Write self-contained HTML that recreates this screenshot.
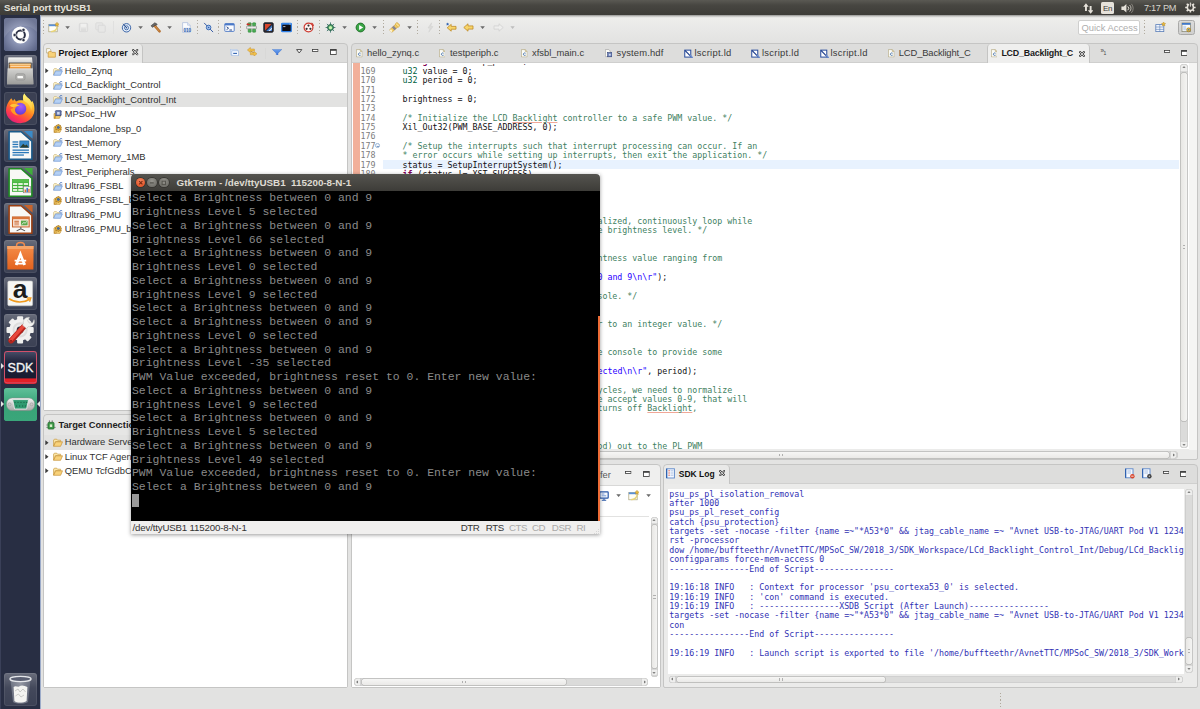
<!DOCTYPE html>
<html lang="en">
<head>
<meta charset="utf-8">
<title>Serial port ttyUSB1</title>
<style>
*{box-sizing:border-box;margin:0;padding:0}
html,body{width:1200px;height:709px;overflow:hidden;background:#e3e3e2}
body{position:relative;font-family:"Liberation Sans","DejaVu Sans",sans-serif;font-size:9.4px;color:#2e2e2e}
.abs{position:absolute}
/* ---------- top panel ---------- */
#panel{position:absolute;left:0;top:0;width:1200px;height:15px;box-shadow:0 .5px 2px rgba(0,0,0,.45);background:linear-gradient(#5a5953,#474641 35%,#3d3c38);color:#e6e2da;}
#panel .title{position:absolute;left:4px;top:1.3px;font-weight:bold;font-size:9.6px;line-height:13px;white-space:nowrap}
#panel .clock{position:absolute;left:1144px;top:1.6px;letter-spacing:-.3px;font-size:9.2px;line-height:13px;white-space:nowrap;color:#d8d4cc}
/* ---------- launcher ---------- */
#launcher{position:absolute;left:0;top:15px;width:41px;height:694px;background:#282e43;border-right:1.2px solid #9cabc9;border-left:1px solid #3a4058}
.tile{position:absolute;left:3px;width:33px;height:33px;border-radius:3px;background:linear-gradient(rgba(255,255,255,.30),rgba(255,255,255,.13) 45%,rgba(255,255,255,.09));box-shadow:inset 0 0 0 1px rgba(255,255,255,.08);overflow:hidden}
/* ---------- eclipse ---------- */
#toolbar{position:absolute;left:41px;top:15px;width:1159px;height:26px;background:linear-gradient(#efefed,#e3e3e2)}
.view{position:absolute;background:linear-gradient(#dddddc 0 18.4px,#cfcfce 18.4px 19.2px,#ebebea 19.2px);border:1px solid #c5c5c4;border-radius:4px 4px 2px 2px}
.view .content{position:absolute;left:0;right:0;bottom:0;background:#fff}
.tab{position:absolute;top:0;height:19px;line-height:19px;white-space:nowrap;font-size:9.4px;color:#333}
.tab.active{font-weight:bold;font-size:8.95px;background:#e9e9e8;border-right:1px solid #c4c4c3;border-radius:4px 4px 0 0;color:#111}
.mono{font-family:"DejaVu Sans Mono","Liberation Mono",monospace;font-size:8.3px;line-height:9.375px;white-space:pre}
#code .c{color:#3f7f5f}#code .k{color:#7f0055;font-weight:bold}#code .t{color:#006141}#code .s{color:#2a00ff}#code .u{text-decoration:underline;text-decoration-color:#f0a898;text-decoration-thickness:.7px;text-underline-offset:1px}
.tree .row{position:absolute;left:0;right:0;height:14.375px;line-height:14.375px;white-space:nowrap;color:#303030}
.tree .row.sel{background:#e2e2e1}
.tree .row span{position:absolute;left:20.7px;top:0}
.tree .row .ar{position:absolute;left:1.1px;top:4.3px;width:3.9px;height:5.4px}
.tree .row .ic{position:absolute;left:9px;top:2.5px;width:10px;height:9px}
.etab{position:absolute;top:-.6px;line-height:19px;white-space:nowrap;color:#3a3a3a;font-size:9.4px}
.etab.act{font-weight:bold;color:#1c1c1c;font-size:8.9px;letter-spacing:-.2px;top:.3px}
.strk{position:absolute;background:#dbdbda;border-radius:4px;box-shadow:inset 0 0 0 .6px #c6c6c5}
.sth{position:absolute;background:linear-gradient(90deg,#e6e5e2,#f6f6f5);border-radius:4px;box-shadow:inset 0 0 0 .7px #b2b2b1}
.sth.h{background:linear-gradient(#f8f8f7,#e8e7e5)}
.lar{position:absolute;width:0;height:0;border:0 solid transparent}
.sbt{position:absolute;background:#eeeeed;box-shadow:inset 0 0 0 .6px #c4c4c3}
.grip{position:absolute}
.sar{position:absolute;width:0;height:0;border:2.2px solid transparent;transform:scale(.8)}
#statusbar{position:absolute;left:41px;top:689px;width:1159px;height:20px;background:#e2e2e1}
/* ---------- gtkterm ---------- */
#term .wb{position:absolute;top:3.7px;width:9.6px;height:9.6px;border-radius:50%;background:radial-gradient(circle at 50% 35%,#96958f,#72716b 70%);box-shadow:0 0 0 .7px #33322e}
#term .wb svg{position:absolute;left:0;top:0;width:100%;height:100%}
#term .cur{background:#9a9a9a}
#term .sb{position:absolute;right:0;top:125px;width:2.2px;height:205.2px;background:#ee6c36}
#term{position:absolute;left:131px;top:174px;width:469px;height:359.6px;box-shadow:0 1px 4px rgba(0,0,0,.4)}
#term .tbar{position:absolute;left:0;top:0;width:100%;height:17px;background:linear-gradient(#55544f,#3d3c38);border-radius:4px 4px 0 0;color:#dfdbd2;font-weight:bold;font-size:9.84px;line-height:17px}
#term .screen{position:absolute;left:0;top:17px;width:100%;height:330.2px;background:#000;color:#8a8a8a;font-family:"Liberation Mono","DejaVu Sans Mono",monospace;font-size:11.458px;line-height:13.75px;white-space:pre;overflow:hidden}
#term .sbar{position:absolute;left:0;top:347.2px;width:100%;height:12.4px;background:#f0efee;font-size:9.7px;line-height:14.2px;color:#333;letter-spacing:-.4px;white-space:nowrap}
</style>
</head>
<body>
<svg width="0" height="0" style="position:absolute">
<defs>
<symbol id="i-proj" viewBox="0 0 10 9"><path d="M0.6 8 L0.6 2.4 L1.4 1.5 L3.4 1.5 L4.2 2.5 L6.4 2.5 L6.4 3.8 L2.6 3.8Z" fill="#fbf0c4" stroke="#c9b478" stroke-width=".6"/><path d="M0.6 8.3 L2.5 3.9 L9.4 3.9 L7.5 8.3Z" fill="#b4d0f4" stroke="#5f8cd0" stroke-width=".6"/><path d="M9.2 0.9 C8 0.1 6.7 0.7 6.7 1.8 C6.7 2.9 8 3.4 9.2 2.7" fill="none" stroke="#3f6cb8" stroke-width=".9"/></symbol>
<symbol id="i-fold" viewBox="0 0 10 9"><path d="M0.6 8.2 L0.6 2.0 L1.4 1.2 L3.8 1.2 L4.6 2.2 L7.6 2.2 L7.6 3.6 L2.6 3.6 L0.6 8.2Z" fill="#fbe7a8" stroke="#c99a3c" stroke-width=".7"/><path d="M0.7 8.3 L2.6 3.8 L9.5 3.8 L7.6 8.3Z" fill="#f8d27a" stroke="#c7933a" stroke-width=".7"/></symbol>
<symbol id="i-hw" viewBox="0 0 10 10"><path d="M0.6 9.2 L0.6 4.0 L2 4 L2 9.2Z M0.7 9.3 L2.4 5.6 L8.2 5.6 L6.6 9.3Z" fill="#f6cf72" stroke="#c08a2c" stroke-width=".7"/><rect x="2.6" y="0.8" width="5.6" height="5.6" fill="#6b7fb5" stroke="#2f3f78" stroke-width=".7"/><rect x="4" y="2.2" width="2.8" height="2.8" fill="#cfd8f0"/><path d="M8.2 1.6h1.2M8.2 3.2h1.2M8.2 4.8h1.2M1.4 1.6h1.2M1.4 3.2h1.2" stroke="#2f3f78" stroke-width=".6"/></symbol>
<symbol id="i-bsp" viewBox="0 0 10 10"><path d="M0.6 9.2 L0.6 3.4 L1.4 2.6 L3 2.6 L3 9.2Z M0.7 9.3 L2.4 5.4 L9 5.4 L7.2 9.3Z" fill="#f6cf72" stroke="#c08a2c" stroke-width=".7"/><circle cx="5.4" cy="3.8" r="3" fill="#f1c550" stroke="#a8741c" stroke-width=".8"/><circle cx="5.4" cy="3.8" r="1.3" fill="#3a6db6" stroke="#1f3f78" stroke-width=".5"/><path d="M5.4 0.2v1M5.4 6.4v1M1.8 3.8h1M8 3.8h1M2.9 1.3l.7.7M7.2 5.6l.7.7M7.9 1.3l-.7.7M3.6 5.6l-.7.7" stroke="#a8741c" stroke-width=".8"/></symbol>
<symbol id="i-cfile" viewBox="0 0 8 10"><path d="M0.5 0.5 H5.2 L7.5 2.8 V9.5 H0.5Z" fill="#fbfbf6" stroke="#a79a6c" stroke-width=".7"/><path d="M5.2 0.5 V2.8 H7.5" fill="#e6dcb0" stroke="#a79a6c" stroke-width=".6"/><path d="M5.6 4.9 C4.2 4.1 2.9 4.9 2.9 6.1 C2.9 7.4 4.3 8 5.6 7.3" fill="none" stroke="#3465a8" stroke-width="1"/></symbol>
<symbol id="i-hdf" viewBox="0 0 9 10"><path d="M0.5 0.5 H4.4 L6.2 2.3 V9 H0.5Z" fill="#fbfbf6" stroke="#9a9a9a" stroke-width=".7"/><rect x="3.2" y="4.2" width="5" height="5" fill="#6b7fb5" stroke="#2f3f78" stroke-width=".7"/><rect x="4.6" y="5.6" width="2.2" height="2.2" fill="#cfd8f0"/></symbol>
<symbol id="i-ld" viewBox="0 0 10 10"><rect x="0.8" y="1" width="6.4" height="7.4" fill="#fff" stroke="#2b4f9e" stroke-width="1.1"/><path d="M1 1.2 L8.8 9.2" stroke="#1f3f8e" stroke-width="1.3"/><path d="M6.4 6.2 L9.4 9.6" stroke="#6f8fd0" stroke-width="1.6"/></symbol>
<symbol id="i-dd" viewBox="0 0 6 4"><path d="M0.1 0.2 H5.9 L3 3.8Z" fill="#6a6a6a"/></symbol>
<symbol id="i-min" viewBox="0 0 8 4"><rect x="0.6" y="0.6" width="6.8" height="2.4" fill="#fff" stroke="#3a3a3a" stroke-width="1"/></symbol>
<symbol id="i-max" viewBox="0 0 8 7"><rect x="0.6" y="0.8" width="6.8" height="5.6" fill="#fff" stroke="#3a3a3a" stroke-width="1"/><rect x="0.2" y="0.2" width="7.6" height="1.8" fill="#3a3a3a"/></symbol>
<symbol id="i-x" viewBox="0 0 8 8"><path d="M1.3 1.3 L6.7 6.7 M6.7 1.3 L1.3 6.7" stroke="#3c3c3c" stroke-width="2.6" stroke-linecap="square"/><path d="M1.3 1.3 L6.7 6.7 M6.7 1.3 L1.3 6.7" stroke="#f6f6f6" stroke-width="1" stroke-linecap="square"/></symbol>
<symbol id="i-arrow" viewBox="0 0 4 6"><path d="M0.2 0.2 L3.8 3 L0.2 5.8Z" fill="#3c3c3c"/></symbol>
</defs>
</svg>

<!-- ===== Eclipse toolbar ===== -->
<div id="toolbar">
<div class="abs" style="left:1.8px;top:5px;width:1.2px;height:15px;background:repeating-linear-gradient(#b2aca0 0 1.3px,transparent 1.3px 3.2px)"></div>
<svg class="abs" style="left:7.2px;top:7.0px;width:11px;height:11px" viewBox="0 0 11 11"><rect x="0.8" y="2.4" width="8.4" height="7.4" fill="#fffef6" stroke="#aaa27a" stroke-width=".7"/><rect x="0.8" y="2.4" width="8.4" height="1.8" fill="#5a90d8"/><path d="M3 9.6 C6 9.4 8.6 7.6 9.2 5" stroke="#e8d47a" stroke-width="1.4" fill="none"/><path d="M9 0.2 L9.7 1.6 L11 1.9 L10 3 L10.3 4.4 L9 3.7 L7.7 4.4 L8 3 L7 1.9 L8.3 1.6Z" fill="#e6b93c" stroke="#b8861e" stroke-width=".4"/></svg>
<svg class="abs" style="left:24.4px;top:11.2px;width:5.2px;height:3.2px" viewBox="0 0 6 4"><path d="M0.1 0.2 H5.9 L3 3.8Z" fill="#6a6a6a"/></svg>
<svg class="abs" style="left:36.5px;top:7.0px;width:11px;height:11px" viewBox="0 0 11 11"><rect x="1.4" y="1.4" width="8.2" height="8.2" rx=".8" fill="#e7e7e6" stroke="#d6d6d5" stroke-width=".8"/><rect x="3" y="1.8" width="5" height="3" fill="#f0f0ef"/><rect x="3" y="6.4" width="5" height="3" fill="#dddddc"/></svg>
<svg class="abs" style="left:54.2px;top:7.0px;width:11px;height:11px" viewBox="0 0 11 11"><rect x="0.8" y="0.8" width="7" height="7" rx=".8" fill="#e8e8e7" stroke="#d8d8d7" stroke-width=".8"/><rect x="3.2" y="3.2" width="7" height="7" rx=".8" fill="#e7e7e6" stroke="#d6d6d5" stroke-width=".8"/></svg>
<div class="abs" style="left:72.0px;top:6px;width:1px;height:13px;background:#e0e0df"></div>
<svg class="abs" style="left:79.5px;top:7.0px;width:11px;height:11px" viewBox="0 0 11 11"><circle cx="5.5" cy="5.8" r="4.2" fill="#e4edf8" stroke="#3c66a8" stroke-width="1"/><circle cx="5.5" cy="5.8" r="2" fill="none" stroke="#3c66a8" stroke-width=".9"/><circle cx="5.5" cy="5.8" r=".7" fill="#2b4f8c"/><path d="M2.2 1.8 L5.5 5.8" stroke="#2b4f8c" stroke-width="1"/></svg>
<svg class="abs" style="left:96.9px;top:11.2px;width:5.2px;height:3.2px" viewBox="0 0 6 4"><path d="M0.1 0.2 H5.9 L3 3.8Z" fill="#6a6a6a"/></svg>
<svg class="abs" style="left:108.5px;top:6.5px;width:12px;height:12px" viewBox="0 0 12 12"><path d="M4.6 3.6 L9.6 9.4" stroke="#b06a2a" stroke-width="2.4" stroke-linecap="round"/><path d="M4.9 3.9 L9.3 9.1" stroke="#d99a52" stroke-width=".9" stroke-linecap="round"/><path d="M1 3.8 L4.8 0.8 L7.2 2.2 L6.2 3.4 L5 3 L2.6 5.4Z" fill="#6a6a6a" stroke="#3c3c3c" stroke-width=".6"/></svg>
<svg class="abs" style="left:126.4px;top:11.2px;width:5.2px;height:3.2px" viewBox="0 0 6 4"><path d="M0.1 0.2 H5.9 L3 3.8Z" fill="#6a6a6a"/></svg>
<svg class="abs" style="left:139.5px;top:7.0px;width:11px;height:11px" viewBox="0 0 11 11"><path d="M1.6 0.6 H6.6 L9.2 3.2 V10.4 H1.6Z" fill="#fbfcfe" stroke="#a9badb" stroke-width=".7"/><path d="M6.6 0.6 V3.2 H9.2" fill="#e6ecf6" stroke="#a9badb" stroke-width=".6"/><rect x="2.6" y="5.6" width="6.4" height="4.4" fill="#dfe8f6"/><text x="2.4" y="9.6" font-family="Liberation Sans, sans-serif" font-size="4.6" font-weight="bold" fill="#2f5fa8">010</text></svg>
<div class="abs" style="left:155.5px;top:5px;width:1.2px;height:15px;background:repeating-linear-gradient(#b2aca0 0 1.3px,transparent 1.3px 3.2px)"></div>
<svg class="abs" style="left:161.5px;top:7.0px;width:11px;height:11px" viewBox="0 0 11 11"><path d="M1.4 1.2 L9.8 9.8" stroke="#3a5fa8" stroke-width="1" stroke-linecap="round"/><circle cx="5.6" cy="5.5" r="2.3" fill="#a9c4ea" stroke="#2f62b0" stroke-width=".9"/><circle cx="5.6" cy="5.5" r=".8" fill="#2f62b0"/></svg>
<div class="abs" style="left:176.5px;top:5px;width:1.2px;height:15px;background:repeating-linear-gradient(#b2aca0 0 1.3px,transparent 1.3px 3.2px)"></div>
<svg class="abs" style="left:182.5px;top:7.0px;width:11px;height:11px" viewBox="0 0 11 11"><rect x="0.8" y="1.6" width="9.4" height="7.8" rx=".6" fill="#fbfcff" stroke="#5a82c8" stroke-width="1"/><rect x="0.8" y="1.6" width="9.4" height="1.8" fill="#4a78c8"/><path d="M2.6 4.8 L4.6 6.2 L2.6 7.6" stroke="#1f3f80" stroke-width=".9" fill="none"/><path d="M5.4 8 H8" stroke="#1f3f80" stroke-width=".9"/></svg>
<div class="abs" style="left:198.5px;top:5px;width:1.2px;height:15px;background:repeating-linear-gradient(#b2aca0 0 1.3px,transparent 1.3px 3.2px)"></div>
<svg class="abs" style="left:204.5px;top:7.0px;width:11px;height:11px" viewBox="0 0 11 11"><rect x="0.6" y="4.1" width="9.8" height="2.8" rx=".6" fill="#ececec" stroke="#7a7a7a" stroke-width=".6"/><rect x="2.2" y="0.8" width="3" height="3" rx=".5" fill="#4aae54" stroke="#1f7a2a" stroke-width=".5"/><rect x="6.6" y="0.8" width="3" height="3" rx=".5" fill="#4aae54" stroke="#1f7a2a" stroke-width=".5"/><rect x="2.2" y="7.2" width="3" height="3" rx=".5" fill="#4aae54" stroke="#1f7a2a" stroke-width=".5"/><rect x="6.6" y="7.2" width="3" height="3" rx=".5" fill="#4aae54" stroke="#1f7a2a" stroke-width=".5"/><path d="M0.2 2.3 L2.2 0.7 V1.7 H4.4 V2.9 H2.2 V3.9Z" fill="#c8342c"/></svg>
<svg class="abs" style="left:222.2px;top:7.0px;width:11px;height:11px" viewBox="0 0 11 11"><rect x="0.8" y="0.8" width="9.4" height="9.4" rx="1" fill="#2c2c34" stroke="#1a1a22" stroke-width=".9"/><path d="M2 2 H8.4 L2 8.4Z" fill="#d8452c"/><path d="M9 3.2 V9 H3.2Z" fill="#3f78c8"/><path d="M9 5.4 L5.4 9 H7 L9 7Z" fill="#e8eef8"/></svg>
<svg class="abs" style="left:239.7px;top:7.0px;width:11px;height:11px" viewBox="0 0 11 11"><rect x="0.7" y="1.3" width="9.6" height="8.4" rx=".8" fill="#0c0c14" stroke="#2f80e8" stroke-width="1.2"/><rect x="0.7" y="1.3" width="9.6" height="1.4" fill="#3a8af0"/><path d="M2.2 4.6 H4.4" stroke="#e8eeff" stroke-width=".8"/><circle cx="9" cy="2" r=".5" fill="#fff"/></svg>
<div class="abs" style="left:256.0px;top:5px;width:1.2px;height:15px;background:repeating-linear-gradient(#b2aca0 0 1.3px,transparent 1.3px 3.2px)"></div>
<svg class="abs" style="left:261.5px;top:7.0px;width:11px;height:11px" viewBox="0 0 11 11"><circle cx="5.5" cy="5.5" r="4.4" fill="#fff4f2" stroke="#cc3a30" stroke-width="1.2"/><circle cx="5.5" cy="3.6" r="1.1" fill="#333"/><circle cx="3.6" cy="6.8" r="1.1" fill="#333"/><circle cx="7.4" cy="6.8" r="1.1" fill="#333"/><path d="M8.4 1 A5 5 0 0 1 10.4 4" stroke="#cc3a30" stroke-width="1.4" fill="none"/></svg>
<div class="abs" style="left:278.0px;top:5px;width:1.2px;height:15px;background:repeating-linear-gradient(#b2aca0 0 1.3px,transparent 1.3px 3.2px)"></div>
<svg class="abs" style="left:283.5px;top:7.0px;width:11px;height:11px" viewBox="0 0 11 11"><path d="M5.5 0.4v10.2M0.6 5.5h9.8M1.9 1.9l7.2 7.2M9.1 1.9l-7.2 7.2" stroke="#2f6a5e" stroke-width=".8"/><circle cx="5.5" cy="5.5" r="3" fill="#4a9a62" stroke="#245a4e" stroke-width=".8"/><circle cx="5.5" cy="5.7" r="1.6" fill="#c8f4b0"/></svg>
<svg class="abs" style="left:301.4px;top:11.2px;width:5.2px;height:3.2px" viewBox="0 0 6 4"><path d="M0.1 0.2 H5.9 L3 3.8Z" fill="#6a6a6a"/></svg>
<svg class="abs" style="left:313.5px;top:7.0px;width:11px;height:11px" viewBox="0 0 11 11"><circle cx="5.5" cy="5.5" r="4.4" fill="#3aa646" stroke="#1a6a22" stroke-width=".9"/><path d="M4.1 3 L8.2 5.5 L4.1 8Z" fill="#fff"/></svg>
<svg class="abs" style="left:331.4px;top:11.2px;width:5.2px;height:3.2px" viewBox="0 0 6 4"><path d="M0.1 0.2 H5.9 L3 3.8Z" fill="#6a6a6a"/></svg>
<div class="abs" style="left:341.5px;top:5px;width:1.2px;height:15px;background:repeating-linear-gradient(#b2aca0 0 1.3px,transparent 1.3px 3.2px)"></div>
<svg class="abs" style="left:348.0px;top:7.0px;width:11px;height:11px" viewBox="0 0 11 11"><g transform="rotate(-42 5.5 5.5)"><rect x="0.2" y="3.9" width="10.6" height="3.4" rx="1" fill="#f4cf62" stroke="#c8962c" stroke-width=".6"/><rect x="3.6" y="3.7" width="2.6" height="3.8" fill="#8a8690"/><rect x="8.2" y="3.3" width="2.6" height="4.6" rx=".8" fill="#f8dc86" stroke="#c8962c" stroke-width=".5"/><rect x="0" y="4.4" width="1.6" height="2.4" fill="#fff6d8"/></g></svg>
<svg class="abs" style="left:365.9px;top:11.2px;width:5.2px;height:3.2px" viewBox="0 0 6 4"><path d="M0.1 0.2 H5.9 L3 3.8Z" fill="#6a6a6a"/></svg>
<div class="abs" style="left:376.0px;top:5px;width:1.2px;height:15px;background:repeating-linear-gradient(#b2aca0 0 1.3px,transparent 1.3px 3.2px)"></div>
<svg class="abs" style="left:383.5px;top:7.0px;width:11px;height:11px" viewBox="0 0 11 11"><path d="M6.6 0.8 L3 6 H5.2 L3.8 10.2 L8 4.6 H5.8Z" fill="#dcdcdb" stroke="#d0d0cf" stroke-width=".5"/></svg>
<div class="abs" style="left:398.0px;top:5px;width:1.2px;height:15px;background:repeating-linear-gradient(#b2aca0 0 1.3px,transparent 1.3px 3.2px)"></div>
<svg class="abs" style="left:405.0px;top:7.0px;width:11px;height:11px" viewBox="0 0 11 11"><path d="M1.2 5.8 L5.2 2.4 V4.4 H10 V7.2 H5.2 V9.2Z" fill="#f7d56a" stroke="#c08a24" stroke-width=".8"/><path d="M1.6 0.4 L2.1 1.5 L3.2 1.7 L2.4 2.5 L2.6 3.6 L1.6 3.1 L0.6 3.6 L0.8 2.5 L0 1.7 L1.1 1.5Z" fill="#2f62b0"/></svg>
<svg class="abs" style="left:421.5px;top:7.0px;width:11px;height:11px" viewBox="0 0 11 11"><path d="M0.8 5.5 L5 1.8 V3.9 H10 V7.1 H5 V9.2Z" fill="#f7d56a" stroke="#c08a24" stroke-width=".8"/></svg>
<svg class="abs" style="left:439.4px;top:11.2px;width:5.2px;height:3.2px" viewBox="0 0 6 4"><path d="M0.1 0.2 H5.9 L3 3.8Z" fill="#6a6a6a"/></svg>
<svg class="abs" style="left:451.5px;top:7.0px;width:11px;height:11px" viewBox="0 0 11 11"><path d="M10.2 5.5 L6 1.8 V3.9 H1 V7.1 H6 V9.2Z" fill="#eeeeed" stroke="#d2d2d1" stroke-width=".8"/></svg>
<svg class="abs" style="left:469.4px;top:11.2px;width:5.2px;height:3.2px" viewBox="0 0 6 4"><path d="M0.3 0.4 H5.7 L3 3.7Z" fill="#bdbdbd"/></svg>
<div class="abs" style="left:1037px;top:4.6px;width:61.5px;height:15.4px;background:#fff;border:1px solid #cfcfce;border-radius:2px;color:#aeaeae;font-size:9.4px;line-height:13.4px;padding-left:2.4px;white-space:nowrap">Quick Access</div>
<div class="abs" style="left:1103.0px;top:5px;width:1.2px;height:15px;background:repeating-linear-gradient(#b2aca0 0 1.3px,transparent 1.3px 3.2px)"></div>
<svg class="abs" style="left:1113.5px;top:7.0px;width:11px;height:11px" viewBox="0 0 11 11"><rect x="0.8" y="2.6" width="8" height="7" fill="#f2f6fc" stroke="#5a7fb8" stroke-width=".8"/><path d="M0.8 5 H8.8 M0.8 7.4 H8.8 M4.8 2.6 V9.6" stroke="#5a7fb8" stroke-width=".6"/><path d="M8.6 0 L9.3 1.3 L10.7 1.5 L9.7 2.5 L9.9 3.9 L8.6 3.3 L7.3 3.9 L7.5 2.5 L6.5 1.5 L7.9 1.3Z" fill="#e6b93c" stroke="#b8861e" stroke-width=".4"/></svg>
<div class="abs" style="left:1137px;top:5.4px;width:16.6px;height:14.4px;border:1px solid #a9a9a8;border-radius:2.5px;background:linear-gradient(#dcdcdb,#cfcfce)"></div>
<svg class="abs" style="left:1139.9px;top:7.0px;width:11px;height:11px" viewBox="0 0 11 11"><rect x="1" y="1" width="8.4" height="8.6" fill="#fdfdf8" stroke="#8b8b78" stroke-width=".8"/><rect x="1" y="1" width="8.4" height="1.8" fill="#3f78c8"/><rect x="2.2" y="3.8" width="3" height="4.6" fill="#c9d8ee"/><circle cx="7.6" cy="7.8" r="2" fill="#e6b93c" stroke="#8a6a1c" stroke-width=".5"/><circle cx="7.6" cy="7.8" r=".8" fill="#3f78c8"/></svg>
</div>

<!-- ===== Project Explorer ===== -->
<div class="view" id="pe" style="left:43px;top:43px;width:305px;height:368px">
  <div class="tab active" style="left:0;width:99px;padding-left:14.6px">Project Explorer</div>
  <svg class="abs" style="left:2.2px;top:3.5px;width:10px;height:10px" viewBox="0 0 10 10"><path d="M0.6 0.6 H3.6 L4.8 1.8 V5 H0.6Z" fill="#fbfbf6" stroke="#a79a6c" stroke-width=".6"/><path d="M2.2 9.2 V4.2 L3 3.4 H5.2 L6 4.4 H9.4 V9.2Z" fill="#f8d27a" stroke="#c7933a" stroke-width=".7"/></svg>
  <svg class="abs" style="left:88.2px;top:5.2px;width:6.4px;height:6.4px"><use href="#i-x"/></svg>
  <svg class="abs" style="left:186.4px;top:4.6px;width:9px;height:7.4px" viewBox="0 0 9 7.4"><rect x="0.5" y="0.5" width="6.6" height="5" fill="#e8f0fb" stroke="#b4c8e6" stroke-width=".6"/><rect x="1.8" y="1.8" width="6.6" height="5" fill="#f6f9fe" stroke="#9ab6e0" stroke-width=".7"/><path d="M3.2 4.4 H7" stroke="#2f62b0" stroke-width="1.1"/></svg>
  <svg class="abs" style="left:202.8px;top:2.6px;width:10.4px;height:9.6px" viewBox="0 0 10.4 9.6"><path d="M0.4 3 L3.4 0.4 V2 H7.4 V4 H3.4 V5.6Z" fill="#f2c24a" stroke="#c8922c" stroke-width=".5"/><path d="M10 6.8 L7 4.4 V5.8 H3.4 V7.8 H7 V9.2Z" fill="#f2c24a" stroke="#c8922c" stroke-width=".5"/><path d="M3.6 4 L6.8 5.8" stroke="#c8922c" stroke-width=".9"/></svg>
  <svg class="abs" style="left:227.6px;top:4.8px;width:10.2px;height:6.6px" viewBox="0 0 10.2 6.6"><defs><linearGradient id="gfun" x1="0" y1="0" x2="0" y2="1"><stop offset="0" stop-color="#6aa0ee"/><stop offset="1" stop-color="#3a72d8"/></linearGradient></defs><path d="M0.3 0.4 H9.9 L6 4.2 V6.4 L4.2 5.6 V4.2Z" fill="url(#gfun)" stroke="#3a6cc8" stroke-width=".4"/></svg>
  <div class="abs" style="left:220.5px;top:4px;width:1px;height:11px;background:#d8d8d7"></div>
  <svg class="abs" style="left:252.4px;top:5.0px;width:6.4px;height:4.6px" viewBox="0 0 6.4 4.6"><path d="M0.6 0.6 H5.8 L3.2 4Z" fill="#fff" stroke="#3a3a3a" stroke-width=".9"/></svg>
  <svg class="abs" style="left:268.4px;top:5.4px;width:6.6px;height:3.2px"><use href="#i-min"/></svg>
  <svg class="abs" style="left:286.4px;top:5.4px;width:6.8px;height:6px"><use href="#i-max"/></svg>
  <div class="content tree" style="top:19px">
<div class="row" style="top:1.10px"><svg class="ar"><use href="#i-arrow"/></svg><svg class="ic"><use href="#i-proj"/></svg><span>Hello_Zynq</span></div>
<div class="row" style="top:15.48px"><svg class="ar"><use href="#i-arrow"/></svg><svg class="ic"><use href="#i-proj"/></svg><span>LCd_Backlight_Control</span></div>
<div class="row sel" style="top:29.85px"><svg class="ar"><use href="#i-arrow"/></svg><svg class="ic"><use href="#i-proj"/></svg><span>LCd_Backlight_Control_Int</span></div>
<div class="row" style="top:44.23px"><svg class="ar"><use href="#i-arrow"/></svg><svg class="ic"><use href="#i-hw"/></svg><span>MPSoc_HW</span></div>
<div class="row" style="top:58.60px"><svg class="ar"><use href="#i-arrow"/></svg><svg class="ic"><use href="#i-bsp"/></svg><span>standalone_bsp_0</span></div>
<div class="row" style="top:72.97px"><svg class="ar"><use href="#i-arrow"/></svg><svg class="ic"><use href="#i-proj"/></svg><span>Test_Memory</span></div>
<div class="row" style="top:87.35px"><svg class="ar"><use href="#i-arrow"/></svg><svg class="ic"><use href="#i-proj"/></svg><span>Test_Memory_1MB</span></div>
<div class="row" style="top:101.72px"><svg class="ar"><use href="#i-arrow"/></svg><svg class="ic"><use href="#i-proj"/></svg><span>Test_Peripherals</span></div>
<div class="row" style="top:116.10px"><svg class="ar"><use href="#i-arrow"/></svg><svg class="ic"><use href="#i-proj"/></svg><span>Ultra96_FSBL</span></div>
<div class="row" style="top:130.47px"><svg class="ar"><use href="#i-arrow"/></svg><svg class="ic"><use href="#i-bsp"/></svg><span>Ultra96_FSBL_bsp</span></div>
<div class="row" style="top:144.85px"><svg class="ar"><use href="#i-arrow"/></svg><svg class="ic"><use href="#i-proj"/></svg><span>Ultra96_PMU</span></div>
<div class="row" style="top:159.22px"><svg class="ar"><use href="#i-arrow"/></svg><svg class="ic"><use href="#i-bsp"/></svg><span>Ultra96_PMU_bsp</span></div>
  </div>
</div>

<!-- ===== Target Connections ===== -->
<div class="view" id="tc" style="left:43px;top:414px;width:305px;height:274px">
  <div class="tab" style="left:0;width:140px;padding-left:14.4px;font-weight:bold;font-size:9.3px;height:20px;line-height:20.6px;color:#222;background:#e6e6e5;border-radius:4px 0 0 0">Target Connections</div>
  <svg class="abs" style="left:2.0px;top:4.6px;width:10px;height:10px" viewBox="0 0 10 10"><path d="M3.4 0.4 V2.4 M6.2 0.4 V2.4" stroke="#555" stroke-width=".8"/><path d="M0.2 5 H2 M0.2 7.4 H2 M8 7.4 H9.8" stroke="#777" stroke-width=".7"/><rect x="2" y="2.4" width="6" height="6.6" rx=".8" fill="#3f9a4a" stroke="#1f6a2a" stroke-width=".8"/><rect x="3.8" y="4.4" width="2.4" height="2.6" fill="#d8f0c8"/></svg>
  <div class="content tree" style="top:20px">
<div class="row sel" style="top:0.30px"><svg class="ar"><use href="#i-arrow"/></svg><svg class="ic"><use href="#i-fold"/></svg><span>Hardware Server</span></div>
<div class="row" style="top:14.68px"><svg class="ar"><use href="#i-arrow"/></svg><svg class="ic"><use href="#i-fold"/></svg><span>Linux TCF Agent</span></div>
<div class="row" style="top:29.05px"><svg class="ar"><use href="#i-arrow"/></svg><svg class="ic"><use href="#i-fold"/></svg><span>QEMU TcfGdbClient</span></div>
  </div>
</div>

<!-- ===== Editor ===== -->
<div class="view" id="ed" style="left:351px;top:43px;width:847px;height:417px">
  <div class="abs" id="edtabs" style="left:0;top:0;width:843px;height:19px">
    <svg class="abs" style="left:4.0px;top:5.2px;width:6.6px;height:8.6px"><use href="#i-cfile"/></svg><span class="etab" style="left:15.0px">hello_zynq.c</span>
    <svg class="abs" style="left:86.7px;top:5.2px;width:6.6px;height:8.6px"><use href="#i-cfile"/></svg><span class="etab" style="left:98.0px">testperiph.c</span>
    <svg class="abs" style="left:169.0px;top:5.2px;width:6.6px;height:8.6px"><use href="#i-cfile"/></svg><span class="etab" style="left:180.0px">xfsbl_main.c</span>
    <svg class="abs" style="left:252.7px;top:5.2px;width:7.6px;height:8.6px"><use href="#i-hdf"/></svg><span class="etab" style="left:264.6px;letter-spacing:.15px">system.hdf</span>
    <svg class="abs" style="left:331.6px;top:4.6px;width:9.4px;height:9.8px"><use href="#i-ld"/></svg><span class="etab" style="left:342.4px;letter-spacing:.28px">lscript.ld</span>
    <svg class="abs" style="left:399.3px;top:4.6px;width:9.4px;height:9.8px"><use href="#i-ld"/></svg><span class="etab" style="left:410.0px;letter-spacing:.28px">lscript.ld</span>
    <svg class="abs" style="left:467.6px;top:4.6px;width:9.4px;height:9.8px"><use href="#i-ld"/></svg><span class="etab" style="left:478.5px;letter-spacing:.28px">lscript.ld</span>
    <svg class="abs" style="left:536.0px;top:5.2px;width:6.6px;height:8.6px"><use href="#i-cfile"/></svg><span class="etab" style="left:546.8px;letter-spacing:-.14px">LCD_Backlight_C</span>
    <div class="abs" style="left:634.5px;top:0;width:103px;height:19.5px;background:#efefee;border:1px solid #c4c4c3;border-bottom:none;border-top:none;border-radius:4px 4px 0 0"></div><svg class="abs" style="left:638.5px;top:5.2px;width:6.6px;height:8.6px"><use href="#i-cfile"/></svg><span class="etab act" style="left:649.4px">LCD_Backlight_C</span>
    <svg class="abs" style="left:726.5px;top:6.6px;width:6px;height:6px"><use href="#i-x"/></svg>
    <span class="abs" style="left:748.4px;top:3px;font-size:6.4px;color:#444;letter-spacing:-.4px">»<span style="font-size:5px;position:relative;top:1.5px">1</span></span>
    <svg class="abs" style="left:811.5px;top:6.2px;width:6.4px;height:3.2px"><use href="#i-min"/></svg>
    <svg class="abs" style="left:828.5px;top:6.4px;width:6.8px;height:6px"><use href="#i-max"/></svg>
  </div>
  <div class="content" id="edc" style="top:19px;bottom:10px;overflow:hidden">
    <div class="abs" style="left:1px;top:0;width:7px;height:100%;background:#f2b09a"></div>
    <div class="abs" style="left:31px;top:96.8px;width:795.6px;height:9px;background:#e8f2fe"></div>
    <div class="abs" style="left:0;top:1.2px;right:0;bottom:0;overflow:hidden"><div class="abs mono" id="nums" style="left:8.6px;top:-6.8px;color:#7d7d7d">168
169
170
171
172
173
174
175
176
177
178
179
180
181
182
183
184
185
186
187
188
189
190
191
192
193
194
195
196
197
198
199
200
201
202
203
204
205
206
207
208
209
210</div>
    <div class="abs mono" id="code" style="left:30.6px;top:-6.8px;color:#111"><span class="k">    unsigned int</span> temp_period;
<span class="t">    u32</span> value = 0;
<span class="t">    u32</span> period = 0;

    brightness = 0;

<span class="c">    /* Initialize the LCD </span><span class="c u">Backlight</span><span class="c"> controller to a safe PWM value. */</span>
    Xil_Out32(PWM_BASE_ADDRESS, 0);

<span class="c">    /* Setup the interrupts such that interrupt processing can occur. If an</span>
<span class="c">    * error occurs while setting up interrupts, then exit the application. */</span>
    status = SetupInterruptSystem();
<span class="k">    if</span> (status != XST_SUCCESS)
    {
<span class="k">        return</span> XST_FAILURE;
    }

<span class="c">    /* Once the interrupt system gets initialized, continuously loop while</span>
<span class="c">    * waiting on user input that changes the brightness level. */</span>
<span class="k">    while</span> (1)
    {
<span class="c">        /* Ask the user to enter a new brightness value ranging from</span>
<span class="c">        * 0 to 9. */</span>
        print(<span class="s">"Select a Brightness between 0 and 9\n\r"</span>);

<span class="c">        /* Read a character in from the console. */</span>
        value = inbyte();

<span class="c">        /* Convert the ASCII input character to an integer value. */</span>
        period = value - 0x30;

<span class="c">        /* Print the period value out to the console to provide some</span>
<span class="c">        * feedback to the user. */</span>
        xil_printf(<span class="s">"Brightness Level %d selected\n\r"</span>, period);

<span class="c">        /* Since the PWM counts raw clock cycles, we need to normalize</span>
<span class="c">        * the user entry beforehand. Here we accept values 0-9, that will</span>
<span class="c">        * scale the PWM duty cycle where 0 turns off </span><span class="c u">Backlight</span><span class="c">,</span>
<span class="c">        * 9 is full brightness. */</span>
        brightness = period * 110000;

<span class="c">        /* Write the final brightness (period) out to the PL PWM</span>
</div>
</div>
    <div class="abs" style="left:23.4px;top:80.4px;width:4.8px;height:4.8px;border-radius:50%;border:.8px solid #9ab4d4;background:#f2f6fb"><div class="abs" style="left:.8px;top:1.3px;width:1.8px;height:.7px;background:#7a9cc8"></div></div>
  </div>
</div>

<!-- ===== bottom middle view ===== -->
<div class="view" id="bm" style="left:351px;top:463.5px;width:310px;height:224.5px;background:#efefee">
  <span class="abs" style="left:248px;top:0;line-height:19px;color:#5a5a5a">fer</span>
  <svg class="abs" style="left:273.4px;top:6.6px;width:6.6px;height:3.2px"><use href="#i-min"/></svg>
  <svg class="abs" style="left:291.0px;top:6.4px;width:6.8px;height:6px"><use href="#i-max"/></svg>
  <div class="content" style="top:20px;background:#fff;border-top:1px solid #d8d8d7">
    <div class="abs" style="left:0;top:30px;right:11px;height:1px;background:#e2e2e1"></div>
    <svg class="abs" style="left:247.0px;top:5.0px;width:10px;height:10px" viewBox="0 0 10 10"><rect x="0.8" y="0.8" width="8.4" height="6.4" rx=".6" fill="#f2f6fc" stroke="#2a58a8" stroke-width="1.2"/><path d="M2.6 3 H5.4 M2.6 4.8 H7.2" stroke="#5a86d0" stroke-width=".8"/><path d="M2.8 9.3 H7.2 M5 7.4 V9" stroke="#2a58a8" stroke-width="1.1"/></svg>
    <svg class="abs" style="left:264.0px;top:8.6px;width:5.2px;height:3.2px"><use href="#i-dd"/></svg>
    <svg class="abs" style="left:276.4px;top:4.4px;width:11px;height:11px" viewBox="0 0 11 11"><rect x="0.8" y="2.4" width="8.4" height="7.4" fill="#fffef6" stroke="#aaa27a" stroke-width=".7"/><rect x="0.8" y="2.4" width="8.4" height="1.8" fill="#5a90d8"/><path d="M3 9.6 C6 9.4 8.6 7.6 9.2 5" stroke="#e8d47a" stroke-width="1.4" fill="none"/><path d="M9 0.2 L9.7 1.6 L11 1.9 L10 3 L10.3 4.4 L9 3.7 L7.7 4.4 L8 3 L7 1.9 L8.3 1.6Z" fill="#e6b93c" stroke="#b8861e" stroke-width=".4"/></svg>
    <svg class="abs" style="left:294.0px;top:8.6px;width:5.2px;height:3.2px"><use href="#i-dd"/></svg>
  </div>
</div>

<!-- ===== SDK Log ===== -->
<div class="view" id="log" style="left:663px;top:463.5px;width:535px;height:224.5px">
  <div class="tab active" style="left:0;width:66px;padding-left:14.8px;font-size:8.5px">SDK Log</div>
  <svg class="abs" style="left:2.0px;top:3.8px;width:9px;height:10.6px" viewBox="0 0 9 10.6"><rect x="0.6" y="0.8" width="7.8" height="9.2" fill="#f4f8ff" stroke="#5a86c8" stroke-width=".9"/><path d="M0.6 0.8 V10" stroke="#2f62b0" stroke-width="1.4"/><path d="M2.4 2.8h1.4M2.4 5h1.4M2.4 7.2h1.4" stroke="#d8452c" stroke-width=".9"/><path d="M4.6 2.8h2.8M4.6 5h2.8M4.6 7.2h2.8" stroke="#9ab4dc" stroke-width=".8"/></svg>
  <svg class="abs" style="left:54.8px;top:5.6px;width:6.4px;height:6.4px"><use href="#i-x"/></svg>
  <svg class="abs" style="left:461.0px;top:3.4px;width:10px;height:11px" viewBox="0 0 10 11"><rect x="0.6" y="0.8" width="7.4" height="9" fill="#f4f8ff" stroke="#5a86c8" stroke-width=".9"/><path d="M0.6 0.8 V9.8" stroke="#2f62b0" stroke-width="1.3"/><path d="M2.4 3h3.6M2.4 5h3.6" stroke="#9ab4dc" stroke-width=".8"/><circle cx="7.4" cy="8.2" r="2.2" fill="#d8452c"/><path d="M6.2 8.2 H8.6" stroke="#fff" stroke-width=".8"/></svg>
  <svg class="abs" style="left:478.0px;top:3.4px;width:10px;height:11px" viewBox="0 0 10 11"><rect x="0.6" y="0.8" width="7.4" height="9" fill="#f4f8ff" stroke="#5a86c8" stroke-width=".9"/><path d="M0.6 0.8 V9.8" stroke="#2f62b0" stroke-width="1.3"/><path d="M2.4 3h3.6M2.4 5h3.6" stroke="#9ab4dc" stroke-width=".8"/><circle cx="7.4" cy="8.2" r="2.2" fill="#444"/><circle cx="7.4" cy="8.2" r=".8" fill="#bbb"/></svg>
  <svg class="abs" style="left:498.6px;top:6.6px;width:6.6px;height:3.2px"><use href="#i-min"/></svg>
  <svg class="abs" style="left:515.6px;top:6.4px;width:6.8px;height:6px"><use href="#i-max"/></svg>
  <div class="content" id="logc" style="top:24px;left:4px;right:13.4px;bottom:13px;overflow:hidden">
    <div class="abs mono" style="left:1.3px;top:1.0px;color:#3232b4">psu_ps_pl_isolation_removal
after 1000
psu_ps_pl_reset_config
catch {psu_protection}
targets -set -nocase -filter {name =~"*A53*0" &amp;&amp; jtag_cable_name =~ "Avnet USB-to-JTAG/UART Pod V1 1234-oj1A"} -index 0
rst -processor
dow /home/buffteethr/AvnetTTC/MPSoC_SW/2018_3/SDK_Workspace/LCd_Backlight_Control_Int/Debug/LCd_Backlight_Control_Int.elf
configparams force-mem-access 0
----------------End of Script----------------

19:16:18 INFO   : Context for processor 'psu_cortexa53_0' is selected.
19:16:19 INFO   : 'con' command is executed.
19:16:19 INFO   : ----------------XSDB Script (After Launch)----------------
targets -set -nocase -filter {name =~"*A53*0" &amp;&amp; jtag_cable_name =~ "Avnet USB-to-JTAG/UART Pod V1 1234-oj1A"} -index 0
con
----------------End of Script----------------

19:16:19 INFO   : Launch script is exported to file '/home/buffteethr/AvnetTTC/MPSoC_SW/2018_3/SDK_Workspace/.sdk/launch_scripts/xilinx_c-c++_application_(system_debugger)/system_debugger_using_debug_lcd_backlight_control_int.elf_on_local.tcl'
</div>
  </div>
</div>

<!-- ===== scrollbars ===== -->
<div id="sbars">
<div class="strk" style="left:1180.2px;top:64px;width:7.6px;height:384.4px"></div>
<div class="sbt" style="left:1180.2px;top:64px;width:7.6px;height:7.6px;border-radius:4px 4px 0 0"></div>
<div class="sbt" style="left:1180.2px;top:440.8px;width:7.6px;height:7.6px;border-radius:0 0 4px 4px"></div>
<div class="sth" style="left:1180.2px;top:71.6px;width:7.6px;height:350.0px"></div>
<div class="grip" style="left:1182.8px;top:244.6px;width:2.4px;height:4px;background:repeating-linear-gradient(#b0b0af 0 .7px,transparent .7px 1.6px)"></div>
<div class="sar" style="left:1181.8px;top:66.4px;border-bottom-color:#5e5e5e;border-top-width:0"></div>
<div class="sar" style="left:1181.8px;top:443.6px;border-top-color:#5e5e5e;border-bottom-width:0"></div>
<div class="strk" style="left:384px;top:451.2px;width:793.5px;height:7.4px"></div>
<div class="sbt" style="left:384px;top:451.2px;width:7.6px;height:7.4px;border-radius:4px 0 0 4px"></div>
<div class="sbt" style="left:1169.9px;top:451.2px;width:7.6px;height:7.4px;border-radius:0 4px 4px 0"></div>
<div class="sth h" style="left:391.6px;top:451.2px;width:778.2px;height:7.4px"></div>
<div class="grip" style="left:778.7px;top:453.7px;width:4px;height:2.4px;background:repeating-linear-gradient(90deg,#b0b0af 0 .7px,transparent .7px 1.6px)"></div>
<div class="sar" style="left:386.4px;top:452.7px;border-right-color:#5e5e5e;border-left-width:0"></div>
<div class="sar" style="left:1172.7px;top:452.7px;border-left-color:#5e5e5e;border-right-width:0"></div>
<div class="abs" style="left:1188.6px;top:63px;width:8.4px;height:387px;background:#f5f5f4"></div>
<div class="strk" style="left:650.8px;top:516.5px;width:7.6px;height:160.0px"></div>
<div class="sbt" style="left:650.8px;top:516.5px;width:7.6px;height:7.6px;border-radius:4px 4px 0 0"></div>
<div class="sbt" style="left:650.8px;top:668.9px;width:7.6px;height:7.6px;border-radius:0 0 4px 4px"></div>
<div class="sth" style="left:650.8px;top:524.1px;width:7.6px;height:144.7px"></div>
<div class="grip" style="left:653.4px;top:594.5px;width:2.4px;height:4px;background:repeating-linear-gradient(#b0b0af 0 .7px,transparent .7px 1.6px)"></div>
<div class="sar" style="left:652.4px;top:518.9px;border-bottom-color:#5e5e5e;border-top-width:0"></div>
<div class="sar" style="left:652.4px;top:671.7px;border-top-color:#5e5e5e;border-bottom-width:0"></div>
<div class="strk" style="left:353.6px;top:678.4px;width:294.7px;height:7.4px"></div>
<div class="sbt" style="left:353.6px;top:678.4px;width:7.6px;height:7.4px;border-radius:4px 0 0 4px"></div>
<div class="sbt" style="left:640.7px;top:678.4px;width:7.6px;height:7.4px;border-radius:0 4px 4px 0"></div>
<div class="sth h" style="left:361.2px;top:678.4px;width:206.1px;height:7.4px"></div>
<div class="grip" style="left:462.2px;top:680.9px;width:4px;height:2.4px;background:repeating-linear-gradient(90deg,#b0b0af 0 .7px,transparent .7px 1.6px)"></div>
<div class="sar" style="left:356.0px;top:679.9px;border-right-color:#5e5e5e;border-left-width:0"></div>
<div class="sar" style="left:643.5px;top:679.9px;border-left-color:#5e5e5e;border-right-width:0"></div>
<div class="strk" style="left:1185.3px;top:488.6px;width:7.6px;height:184.2px"></div>
<div class="sbt" style="left:1185.3px;top:488.6px;width:7.6px;height:7.6px;border-radius:4px 4px 0 0"></div>
<div class="sbt" style="left:1185.3px;top:665.2px;width:7.6px;height:7.6px;border-radius:0 0 4px 4px"></div>
<div class="sth" style="left:1185.3px;top:636.8px;width:7.6px;height:27.9px"></div>
<div class="grip" style="left:1187.9px;top:648.8px;width:2.4px;height:4px;background:repeating-linear-gradient(#b0b0af 0 .7px,transparent .7px 1.6px)"></div>
<div class="sar" style="left:1186.9px;top:491.0px;border-bottom-color:#5e5e5e;border-top-width:0"></div>
<div class="sar" style="left:1186.9px;top:668.0px;border-top-color:#5e5e5e;border-bottom-width:0"></div>
<div class="strk" style="left:668.6px;top:675.7px;width:514.0px;height:7.4px"></div>
<div class="sbt" style="left:668.6px;top:675.7px;width:7.6px;height:7.4px;border-radius:4px 0 0 4px"></div>
<div class="sbt" style="left:1175.0px;top:675.7px;width:7.6px;height:7.4px;border-radius:0 4px 4px 0"></div>
<div class="sth h" style="left:676.3px;top:675.7px;width:210.2px;height:7.4px"></div>
<div class="grip" style="left:779.4px;top:678.2px;width:4px;height:2.4px;background:repeating-linear-gradient(90deg,#b0b0af 0 .7px,transparent .7px 1.6px)"></div>
<div class="sar" style="left:671.0px;top:677.2px;border-right-color:#5e5e5e;border-left-width:0"></div>
<div class="sar" style="left:1177.8px;top:677.2px;border-left-color:#5e5e5e;border-right-width:0"></div>
</div>

<div id="statusbar"><div class="abs" style="left:958.6px;top:4px;width:1.2px;height:14px;background:repeating-linear-gradient(#b0a99c 0 1.3px,transparent 1.3px 3.2px)"></div></div>

<!-- ===== GtkTerm window ===== -->
<div id="term">
  <div class="tbar"><span class="wb" style="left:4.8px;background:radial-gradient(circle at 50% 35%,#f58a62,#e4572b 70%)"><svg viewBox="0 0 10 10"><path d="M3.3 3.3 L6.7 6.7 M6.7 3.3 L3.3 6.7" stroke="#7a2a12" stroke-width="1.3"/></svg></span><span class="wb" style="left:16.4px"><svg viewBox="0 0 10 10"><path d="M3 5.1 H7" stroke="#55544e" stroke-width="1.3"/></svg></span><span class="wb" style="left:28.2px"><svg viewBox="0 0 10 10"><rect x="3.2" y="3.3" width="3.6" height="3.6" fill="none" stroke="#55544e" stroke-width="1.1"/></svg></span><span class="abs" style="left:45.6px;top:0">GtkTerm - /dev/ttyUSB1&nbsp; 115200-8-N-1</span></div>
  <div class="screen"><div class="abs" style="left:1px;top:.4px">Select a Brightness between 0 and 9
Brightness Level 5 selected
Select a Brightness between 0 and 9
Brightness Level 66 selected
Select a Brightness between 0 and 9
Brightness Level 0 selected
Select a Brightness between 0 and 9
Brightness Level 9 selected
Select a Brightness between 0 and 9
Select a Brightness between 0 and 9
Brightness Level 0 selected
Select a Brightness between 0 and 9
Brightness Level -35 selected
PWM Value exceeded, brightness reset to 0. Enter new value:
Select a Brightness between 0 and 9
Brightness Level 9 selected
Select a Brightness between 0 and 9
Brightness Level 5 selected
Select a Brightness between 0 and 9
Brightness Level 49 selected
PWM Value exceeded, brightness reset to 0. Enter new value:
Select a Brightness between 0 and 9
<span class="cur"> </span></div><div class="sb"></div></div>
  <div class="sbar"><span class="abs" style="left:1.6px;letter-spacing:-.17px">/dev/ttyUSB1 115200-8-N-1</span><span class="abs" style="left:329.7px;color:#333">DTR</span><span class="abs" style="left:354.8px;color:#333">RTS</span><span class="abs" style="left:378.0px;color:#a9a9a8">CTS</span><span class="abs" style="left:401.0px;color:#a9a9a8">CD</span><span class="abs" style="left:420.8px;color:#a9a9a8">DSR</span><span class="abs" style="left:445.5px;color:#a9a9a8">RI</span><svg class="abs" style="left:462px;top:7.5px;width:6px;height:6px" viewBox="0 0 6 6"><path d="M5.5 0.5v.01M5.5 2.5v.01M3.5 2.5v.01M5.5 4.5v.01M3.5 4.5v.01M1.5 4.5v.01" stroke="#cfcfce" stroke-width="1" stroke-linecap="round"/></svg></div>
</div>

<!-- ===== Unity top panel ===== -->
<div id="panel">
  <span class="title">Serial port ttyUSB1</span>
  <span class="clock">7:17 PM</span>
  <svg class="abs" style="left:1082.6px;top:2.6px;width:10.6px;height:11.2px" viewBox="0 0 10 10.5"><path d="M2.8 0.3 L5.4 3.6 H3.7 V7.6 H1.9 V3.6 H0.2Z" fill="#e6e2da"/><path d="M7.2 10.2 L4.6 6.9 H6.3 V2.9 H8.1 V6.9 H9.8Z" fill="#e6e2da"/></svg>
  <div class="abs" style="left:1101.2px;top:1.8px;width:12.8px;height:11.8px;background:#e6e2da;border-radius:1.5px;color:#3c3b37;font-size:8px;line-height:13px;text-align:center;letter-spacing:-.2px">En</div>
  <svg class="abs" style="left:1121px;top:3px;width:14px;height:10.6px" viewBox="0 0 14 10.6"><path d="M0.4 3.6 H2.6 L5.4 1 V9.6 L2.6 7 H0.4Z" fill="#e6e2da"/><path d="M6.8 3.4 A2.6 2.6 0 0 1 6.8 7.2" stroke="#e6e2da" stroke-width="1" fill="none"/><path d="M8.6 2 A4.6 4.6 0 0 1 8.6 8.6" stroke="#cfcbc3" stroke-width=".9" fill="none"/><path d="M10.4 0.8 A6.6 6.6 0 0 1 10.4 9.8" stroke="#9a978f" stroke-width=".8" fill="none"/></svg>
  <svg class="abs" style="left:1185px;top:2.4px;width:10.8px;height:10.8px" viewBox="0 0 12 12"><circle cx="6" cy="6" r="3.4" fill="none" stroke="#e6e2da" stroke-width="1.7"/><path d="M6 0.2V2.4M6 9.6V11.8M0.2 6H2.4M9.6 6H11.8M1.9 1.9L3.4 3.4M8.6 8.6L10.1 10.1M10.1 1.9L8.6 3.4M3.4 8.6L1.9 10.1" stroke="#e6e2da" stroke-width="1.7"/><path d="M6 0.4 V5.4" stroke="#3c3b37" stroke-width="2.6"/><path d="M6 0.8 V5.2" stroke="#e6e2da" stroke-width="1.1"/></svg>
</div>

<!-- ===== Unity launcher ===== -->
<div id="launcher">
<div class="tile" style="top:3.3px;background:#6a7394"><svg viewBox="0 0 33 33" width="33" height="33"><defs><radialGradient id="gd" cx="50%" cy="55%" r="60%"><stop offset="0" stop-color="#c9cee0"/><stop offset=".45" stop-color="#8a93b3"/><stop offset="1" stop-color="#5e6789"/></radialGradient></defs><rect width="33" height="33" fill="url(#gd)"/><path d="M0 20 C8 6 24 4 33 14 V0 H0Z" fill="#fff" opacity=".10"/><circle cx="16.5" cy="17" r="8.6" fill="#fff"/><circle cx="16.5" cy="17" r="4.4" fill="none" stroke="#2c3146" stroke-width="2"/><circle cx="10.6" cy="17" r="1.7" fill="#2c3146" stroke="#fff" stroke-width=".7"/><circle cx="19.5" cy="11.9" r="1.7" fill="#2c3146" stroke="#fff" stroke-width=".7"/><circle cx="19.5" cy="22.1" r="1.7" fill="#2c3146" stroke="#fff" stroke-width=".7"/></svg></div>
<div class="tile" style="top:40.2px;"><svg viewBox="0 0 33 33" width="33" height="33"><defs><linearGradient id="gf" x1="0" y1="0" x2="0" y2="1"><stop offset="0" stop-color="#d2d2d0"/><stop offset="1" stop-color="#9c9c9a"/></linearGradient><linearGradient id="gf2" x1="0" y1="0" x2="0" y2="1"><stop offset="0" stop-color="#f6f6f5"/><stop offset="1" stop-color="#cfcfcd"/></linearGradient></defs><path d="M4.4 2.4 H28 L29.4 29.2 H3Z" fill="#b4b4b2"/><path d="M4.4 2.4 H28 L28.4 8 H4Z" fill="url(#gf2)"/><rect x="4.8" y="7.6" width="22.8" height="7" fill="#3a3a3c"/><rect x="5.6" y="8.6" width="21.2" height="5.6" fill="#ee9a3a"/><rect x="5.6" y="8.6" width="21.2" height="1.2" fill="#fbd9a0"/><rect x="6.4" y="10.8" width="19.6" height=".9" fill="#fff3dc"/><path d="M3.7 13.8 H28.7 L29.4 29.2 H3Z" fill="url(#gf)"/><path d="M3.7 13.8 H28.7" stroke="#e4e4e2" stroke-width=".7"/><rect x="11.8" y="18.8" width="9.2" height="6.2" rx="1.6" fill="#b0b0ae" stroke="#8c8c8a" stroke-width=".6"/><rect x="13.4" y="21" width="5.6" height="2.2" rx=".6" fill="#fafaf9"/></svg></div>
<div class="tile" style="top:77.2px;background:rgba(255,255,255,.09);overflow:visible"><svg viewBox="0 0 33 33" width="33" height="33"><defs><linearGradient id="gx" x1=".85" y1=".05" x2=".3" y2="1"><stop offset="0" stop-color="#fff36a"/><stop offset=".3" stop-color="#ffbd2e"/><stop offset=".55" stop-color="#ff7a22"/><stop offset=".8" stop-color="#ff3a4e"/><stop offset="1" stop-color="#e3207a"/></linearGradient><radialGradient id="gp" cx="55%" cy="30%" r="75%"><stop offset="0" stop-color="#a95cf6"/><stop offset="1" stop-color="#5a3ad8"/></radialGradient><linearGradient id="gfl" x1="0" y1="0" x2="0" y2="1"><stop offset="0" stop-color="#fff67a"/><stop offset="1" stop-color="#ffc23a"/></linearGradient></defs><path d="M7.3 6.2 L9 9 L10.4 7 L12 9.6 C14 8.4 17 8 19.4 8.6 C18.6 5.6 19.2 3 20.3 1.4 C22 5 26 6.6 27.4 10 L28.4 9 C30.2 12 30.6 15.4 30.4 18.6 C30 26 23.6 31.2 16.2 31.2 C8.4 31.2 2 25.6 2 18.4 C2 14 4 9.6 7.3 6.2Z" fill="url(#gx)"/><path d="M20.3 1.4 C22 5 26 6.6 27.4 10 C28.6 13 28.4 16 27 19 C26.6 14 24 11 19.4 8.6 C18.6 5.6 19.2 3 20.3 1.4Z" fill="url(#gfl)"/><circle cx="16.3" cy="16.8" r="6" fill="url(#gp)"/><path d="M6 13.4 C8.6 11.4 12.4 11.6 15.6 13.6 C13 14 11.6 15 11 17.4 C10.8 20 12.4 22.4 15 23.4 C10.6 23.6 7 20.6 6.6 17 C8 16.8 9 16.2 9.6 15.2 C8.2 15 6.8 14.4 6 13.4Z" fill="#ff9a24"/><path d="M6 13.4 C8.6 11.4 12.4 11.6 15.6 13.6 C13.4 13.8 11.4 14.6 9.6 15.2 C8.2 15 6.8 14.4 6 13.4Z" fill="#ffc43a"/></svg></div>
<div class="tile" style="top:114.1px;"><svg viewBox="0 0 33 33" width="33" height="33"><g transform="translate(16.5 16.5) scale(1.14 1.02) translate(-17 -16.5)"><path d="M7 3 H17.6 L27 12.4 V30 H7Z" fill="#f8f8f6" stroke="#1a5a8a" stroke-width="1.4" stroke-linejoin="round"/><path d="M20 2.4 L27.6 2.4 L27.6 10Z" fill="#3a8ac8"/><rect x="10" y="12.4" width="5" height="1.3" fill="#2a78b8"/><rect x="10" y="14.8" width="5" height="1.3" fill="#2a78b8"/><rect x="10" y="17.2" width="5" height="1.3" fill="#2a78b8"/><rect x="16.4" y="12" width="8" height="6.6" fill="#3a8ac8" stroke="#1a5a8a" stroke-width=".5"/><path d="M16.6 18.4 L19.4 14.8 L21 16.6 L22.4 15.4 L24.2 18.4Z" fill="#2c3e2c"/><rect x="10" y="20.4" width="14.4" height="1.3" fill="#2a78b8"/><rect x="10" y="22.8" width="14.4" height="1.3" fill="#2a78b8"/><rect x="10" y="25.2" width="10" height="1.3" fill="#2a78b8"/></g></svg></div>
<div class="tile" style="top:151.0px;"><svg viewBox="0 0 33 33" width="33" height="33"><g transform="translate(16.5 16.5) scale(1.14 1.02) translate(-17 -16.5)"><path d="M7 3 H17.6 L27 12.4 V30 H7Z" fill="#f8f8f6" stroke="#1f8a22" stroke-width="1.4" stroke-linejoin="round"/><path d="M20 2.4 L27.6 2.4 L27.6 10Z" fill="#3fae3a"/><rect x="10" y="13.6" width="14" height="11.6" fill="#dff2d8" stroke="#3fae3a" stroke-width=".8"/><path d="M10 16.5h14M10 19.4h14M10 22.3h14M14.6 13.6v11.6M19.4 13.6v11.6" stroke="#3fae3a" stroke-width=".9"/><rect x="10" y="13.6" width="14" height="2.9" fill="#56bf4c"/><rect x="19.6" y="20.6" width="6" height="6" fill="#f2f2f0" stroke="#777" stroke-width=".5"/><rect x="20.6" y="23.4" width="1.4" height="2.6" fill="#e0742c"/><rect x="22.2" y="21.8" width="1.4" height="4.2" fill="#3a7ad0"/><rect x="23.8" y="22.8" width="1.2" height="3.2" fill="#e0742c"/></g></svg></div>
<div class="tile" style="top:187.9px;"><svg viewBox="0 0 33 33" width="33" height="33"><g transform="translate(16.5 16.5) scale(1.14 1.02) translate(-17 -16.5)"><path d="M7 3 H17.6 L27 12.4 V30 H7Z" fill="#f8f8f6" stroke="#9a3f12" stroke-width="1.4" stroke-linejoin="round"/><path d="M20 2.4 L27.6 2.4 L27.6 10Z" fill="#c8642c"/><rect x="10" y="14" width="14.6" height="9.8" fill="#fbe9dc" stroke="#c8642c" stroke-width="1"/><rect x="10" y="14" width="14.6" height="2.2" fill="#d8743a"/><path d="M11.6 18.2h4M11.6 20h4M11.6 21.8h4" stroke="#c8642c" stroke-width=".9"/><rect x="17.4" y="17.6" width="5.8" height="4.6" fill="#5aa84a"/><path d="M18 21.4 L20 19.4 L21 20.2 L22.8 18.2" stroke="#fff" stroke-width=".7" fill="none"/><path d="M17.3 23.8 V26 M13.6 27.6 L17.3 25.6 L21 27.6" stroke="#555" stroke-width=".9" fill="none"/></g></svg></div>
<div class="tile" style="top:224.9px;"><svg viewBox="0 0 33 33" width="33" height="33"><defs><linearGradient id="gs" x1="0" y1="0" x2="0" y2="1"><stop offset="0" stop-color="#f58c48"/><stop offset="1" stop-color="#e2621e"/></linearGradient></defs><path d="M12.6 8.4 V5.6 C12.6 1.6 20.4 1.6 20.4 5.6 V8.4" fill="none" stroke="#f08a4c" stroke-width="1.5"/><path d="M3.2 6 H29.6 L29.4 29.5 H3.4Z" fill="url(#gs)"/><path d="M3.2 6 H29.6 L29.5 9 H3.3Z" fill="#f9ad74" opacity=".75"/><path d="M12.2 25 L16.4 14.2 L20.6 25" fill="none" stroke="#fff" stroke-width="2.6" stroke-linejoin="miter"/><path d="M10.6 20.6 H22.2 M11.4 23.6 H21.4" stroke="#fff" stroke-width="1.7"/></svg></div>
<div class="tile" style="top:261.8px;"><svg viewBox="0 0 33 33" width="33" height="33"><rect x="3.8" y="4" width="24.8" height="24.8" rx="1.4" fill="#f6f6f4" stroke="#c9c9c7" stroke-width=".6"/><text x="16" y="20.9" text-anchor="middle" font-family="Liberation Sans, sans-serif" font-weight="bold" font-size="26.5" fill="#1c1c1c">a</text><path d="M5 21.6 C11 26 20 26 25.6 22.2" fill="none" stroke="#f29a1c" stroke-width="1.7"/><path d="M22.8 21 L26.8 21 L25.6 24.6" fill="none" stroke="#f29a1c" stroke-width="1.4"/></svg></div>
<div class="tile" style="top:298.7px;"><svg viewBox="0 0 33 33" width="33" height="33"><g transform="translate(16.1 15.9)"><g fill="#efefee"><rect x="-3" y="-13.6" width="6" height="27.2" rx="1"/><rect x="-3" y="-13.6" width="6" height="27.2" rx="1" transform="rotate(45)"/><rect x="-3" y="-13.6" width="6" height="27.2" rx="1" transform="rotate(90)"/><rect x="-3" y="-13.6" width="6" height="27.2" rx="1" transform="rotate(135)"/></g><circle r="10.8" fill="#f1f1f0"/><circle r="7.6" fill="#dededd"/><circle r="5.6" fill="#ececeb"/><circle r="3.4" fill="#2c3040"/></g><path d="M7.2 26.6 L19.6 12.8" stroke="#b8241c" stroke-width="5.6" stroke-linecap="round"/><path d="M7 26 L19.2 12.4" stroke="#e8483c" stroke-width="3.2" stroke-linecap="round"/><circle cx="7" cy="26.8" r=".9" fill="#7a1410"/><path d="M19.4 9.6 C18.6 5.6 22 2.6 25.6 3.4 L23.6 6.6 L25.2 9 L28.6 8.8 L30 5.6 C31.6 9.4 28.6 13.4 24.4 12.6 L22.4 14.6 L18.4 11Z" fill="#f2f2f0" stroke="#b8b8b6" stroke-width=".5"/></svg></div>
<div class="tile" style="top:335.7px;background:#1d2138;box-shadow:inset 0 0 0 1px #cf4a5c"><svg viewBox="0 0 33 33" width="33" height="33"><defs><linearGradient id="gk" x1="0" y1="0" x2="0" y2="1"><stop offset="0" stop-color="#4a4f6a"/><stop offset=".35" stop-color="#1d2138"/><stop offset="1" stop-color="#171a2e"/></linearGradient></defs><rect width="33" height="33" fill="url(#gk)"/><rect x="0" y="27.4" width="33" height="5.6" fill="#e21f26"/><rect x=".5" y=".5" width="32" height="31.4" rx="2.5" fill="none" stroke="#d2506a" stroke-width="1"/><text x="16.5" y="21.2" text-anchor="middle" font-family="Liberation Sans, sans-serif" font-size="12.6" fill="#f4f4f4" stroke="#f4f4f4" stroke-width=".35">SDK</text></svg></div>
<div class="tile" style="top:372.6px;background:#3aa67a"><svg viewBox="0 0 33 33" width="33" height="33"><defs><linearGradient id="gg" x1="0" y1="0" x2="0" y2="1"><stop offset="0" stop-color="#5fc09a"/><stop offset=".5" stop-color="#38a377"/><stop offset="1" stop-color="#3aa67a"/></linearGradient><linearGradient id="gm" x1="0" y1="0" x2="0" y2="1"><stop offset="0" stop-color="#f4f4f4"/><stop offset="1" stop-color="#a8a8a8"/></linearGradient></defs><rect width="33" height="33" fill="url(#gg)"/><rect x="2.6" y="10" width="28" height="12.6" rx="5.6" fill="url(#gm)" stroke="#8a8a8a" stroke-width=".5"/><circle cx="5.6" cy="16.3" r="1.5" fill="#c8c8c8" stroke="#888" stroke-width=".4"/><circle cx="27.6" cy="16.3" r="1.5" fill="#c8c8c8" stroke="#888" stroke-width=".4"/><path d="M8.6 11.6 H24.6 L22.6 21 H10.6Z" fill="#2f9a70" stroke="#e8e8e8" stroke-width=".9"/><path d="M11 14.4h.01M14 14.4h.01M17 14.4h.01M20 14.4h.01M22.6 14.4h.01M12.6 18h.01M15.6 18h.01M18.6 18h.01M21.4 18h.01" stroke="#1f6a4c" stroke-width="1.3" stroke-linecap="round"/></svg></div>
<div class="tile" style="top:657.6px;"><svg viewBox="0 0 33 33" width="33" height="33"><defs><linearGradient id="gt" x1="0" y1="0" x2="1" y2="0"><stop offset="0" stop-color="#8a8f9e"/><stop offset=".5" stop-color="#c9ccd4"/><stop offset="1" stop-color="#7a7f90"/></linearGradient></defs><path d="M6.4 6 L9 29 C12 31 21 31 24 29 L26.6 6Z" fill="url(#gt)" opacity=".55"/><path d="M9.6 14 C12 12 14 15 16 13 C18 11.6 21 13 23.4 14 L22.6 28 C19 30 13 30 10.4 28Z" fill="#f3f3f1"/><path d="M11 18 l3 -2 l2 3 l3 -3 l2.6 3 M11.4 23 l3 -2 l2.6 3 l3 -2" stroke="#c4c4c2" stroke-width=".9" fill="none"/><ellipse cx="16.5" cy="6" rx="10.6" ry="2.6" fill="#5a5f72" stroke="#e4e6ea" stroke-width="1.4"/></svg></div>
<div class="lar" style="left:0;top:348.4px;border-left-color:#e4e4e4;border-width:3px 0 3px 3.4px"></div>
<div class="lar" style="left:0;top:385.6px;border-left-color:#e4e4e4;border-width:3px 0 3px 3.4px"></div>
<div class="lar" style="left:36.2px;top:385.6px;border-right-color:#e4e4e4;border-width:3px 3.4px 3px 0"></div>
</div>

</body>
</html>
